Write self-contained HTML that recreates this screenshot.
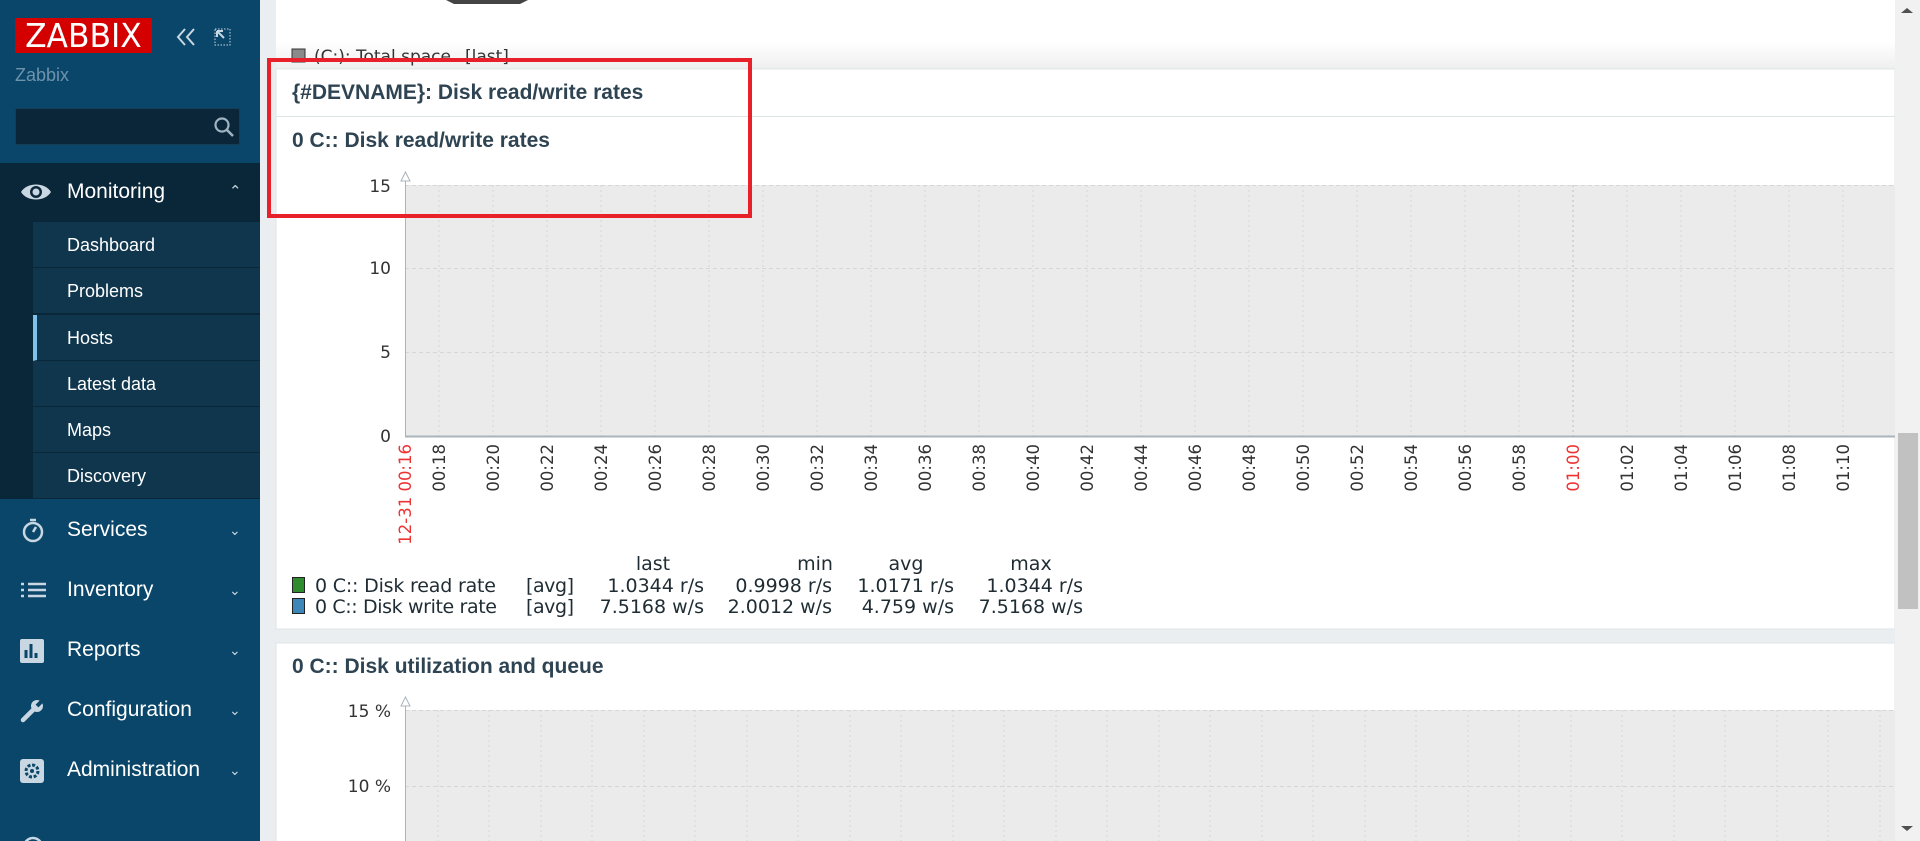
<!DOCTYPE html>
<html style="overflow:hidden;height:841px"><head><meta charset="utf-8"><style>
*{margin:0;padding:0;box-sizing:border-box}
body{width:1920px;height:841px;overflow:hidden;background:#ebeef0;font-family:"Liberation Sans",Arial,sans-serif;position:relative}
#sb{position:absolute;left:0;top:0;width:260px;height:841px;background:#0a466a;overflow:hidden}
.logo{position:absolute;left:15px;top:18px;width:137px;height:35px;background:#d40000;color:#fff;font-size:33px;line-height:36px;text-align:center;font-family:"DejaVu Sans",sans-serif;overflow:hidden}
.logo span{display:inline-block;transform:scaleX(0.95)}
.sub{position:absolute;left:15px;top:65px;color:#6f93aa;font-size:18px}
.srch{position:absolute;left:15px;top:108px;width:225px;height:37px;background:#0b2638;border:1px solid #163d55;border-radius:2px}
.mon{position:absolute;left:0;top:163px;width:260px;height:59px;background:#0a2739}
.subm{position:absolute;left:0;top:222px;width:260px;height:277px;background:#0a2739}
.subm div{position:absolute;left:33px;width:227px;height:46px;background:#10364e;border-bottom:1px solid #0a2739;color:#fff;font-size:18px;line-height:46px;padding-left:34px}
.mi{position:absolute;left:0;width:260px;height:40px;color:#fff;font-size:21px;line-height:40px}
.mi span{position:absolute;left:67px}
.mi svg{position:absolute;left:19px;top:8px}
.mi i{position:absolute;left:229px;font-style:normal;font-size:14px;color:#c9d6df}
.t{position:absolute;font-weight:bold;color:#2f4453;font-size:21px}
</style></head><body>
<div id="sb">
 <div class="logo"><span>ZABBIX</span></div>
 <svg style="position:absolute;left:176px;top:27px" width="22" height="20"><path d="M9 2L2 10l7 8M18 2l-7 8 7 8" stroke="#c8d7e1" stroke-width="2" fill="none"/></svg>
 <svg style="position:absolute;left:214px;top:27px" width="18" height="20"><rect x="1" y="2" width="15" height="16" fill="none" stroke="#c8d7e1" stroke-dasharray="1.5 1.5"/><path d="M3 4h6M3 4v6M3 4l7 7" stroke="#c8d7e1" stroke-width="2" fill="none"/></svg>
 <div class="sub">Zabbix</div>
 <div class="srch"><svg style="position:absolute;left:196px;top:6px" width="24" height="24"><circle cx="10" cy="10" r="6.5" fill="none" stroke="#9fb4c2" stroke-width="2.2"/><path d="M15 15l6 6" stroke="#9fb4c2" stroke-width="2.6"/></svg></div>
 <div class="mon"></div>
 <div class="mi" style="top:172px"><svg width="34" height="24"><path d="M2 12C8 2 26 2 32 12C26 22 8 22 2 12Z" fill="#c8d7e1"/><circle cx="17" cy="12" r="6" fill="#0a2739"/><circle cx="17" cy="12" r="3.5" fill="#c8d7e1"/></svg><span>Monitoring</span><i style="font-size:15px">&#8963;</i></div>
 <div class="subm">
  <div style="top:0">Dashboard</div>
  <div style="top:46px">Problems</div>
  <div style="top:93px;border-left:4px solid #7fc1e8;padding-left:30px">Hosts</div>
  <div style="top:139px">Latest data</div>
  <div style="top:185px">Maps</div>
  <div style="top:231px">Discovery</div>
 </div>
 <div class="mi" style="top:510px"><svg width="30" height="26"><circle cx="14" cy="14" r="9" fill="none" stroke="#c8d7e1" stroke-width="2.5"/><path d="M11 2h6M14 14l3-5" stroke="#c8d7e1" stroke-width="2.5"/></svg><span>Services</span><i>&#8964;</i></div>
 <div class="mi" style="top:570px"><svg width="30" height="26"><path d="M2 6h3M9 6h18M2 12h3M9 12h18M2 18h3M9 18h18" stroke="#c8d7e1" stroke-width="2.5"/></svg><span>Inventory</span><i>&#8964;</i></div>
 <div class="mi" style="top:630px"><svg width="30" height="26"><rect x="1" y="1" width="24" height="24" rx="2" fill="#c8d7e1"/><path d="M7 20v-8M12 20V6M17 20v-5" stroke="#0a466a" stroke-width="3"/></svg><span>Reports</span><i>&#8964;</i></div>
 <div class="mi" style="top:690px"><svg width="30" height="26"><path d="M4 22l11-11" stroke="#c8d7e1" stroke-width="4.5" stroke-linecap="round"/><circle cx="18" cy="8" r="6" fill="#c8d7e1"/><path d="M18 8l6-6" stroke="#0a466a" stroke-width="4"/></svg><span>Configuration</span><i>&#8964;</i></div>
 <div class="mi" style="top:750px"><svg width="30" height="26"><rect x="1" y="1" width="24" height="24" rx="3" fill="#c8d7e1"/><circle cx="13" cy="13" r="6" fill="none" stroke="#0a466a" stroke-width="3" stroke-dasharray="3 1.7"/><circle cx="13" cy="13" r="2" fill="#0a466a"/></svg><span>Administration</span><i>&#8964;</i></div>
 <div class="mi" style="top:825px;height:16px;overflow:hidden"><svg width="30" height="26"><circle cx="14" cy="14" r="9" fill="none" stroke="#c8d7e1" stroke-width="2.5"/></svg></div>
</div>

<svg style="position:absolute;left:0;top:0" width="1895" height="841" font-family="DejaVu Sans, sans-serif">
 <defs><linearGradient id="g" x1="0" y1="0" x2="0" y2="1"><stop offset="0.6" stop-color="#fff"/><stop offset="1" stop-color="#eee"/></linearGradient></defs>
 <rect x="276" y="0" width="1619" height="70" fill="url(#g)"/>
 <path d="M446 0h82l-8 4h-66z" fill="#444"/>
 <rect x="292" y="49" width="13" height="13" fill="#8a8a8a" stroke="#333"/>
 <text x="314" y="62" font-size="17" fill="#333">(C:): Total space</text>
 <text x="465" y="62" font-size="17" fill="#333">[last]</text>
 <rect x="276" y="69" width="1619" height="560" fill="#fff" stroke="#dfe4e7"/>
 <line x1="276" y1="116.5" x2="1895" y2="116.5" stroke="#dfe4e7"/>
 <rect x="405" y="185" width="1490" height="251" fill="#ebebeb"/>
 <g stroke="#d3d7da" stroke-dasharray="4 3"><line x1="405" y1="185.5" x2="1895" y2="185.5"/><line x1="405" y1="268.5" x2="1895" y2="268.5"/><line x1="405" y1="352.5" x2="1895" y2="352.5"/></g>
 <g stroke="#d3d7da" stroke-dasharray="2 3">
  <line x1="439" y1="185" x2="439" y2="436"/><line x1="493" y1="185" x2="493" y2="436"/><line x1="547" y1="185" x2="547" y2="436"/><line x1="601" y1="185" x2="601" y2="436"/><line x1="655" y1="185" x2="655" y2="436"/><line x1="709" y1="185" x2="709" y2="436"/><line x1="763" y1="185" x2="763" y2="436"/><line x1="817" y1="185" x2="817" y2="436"/><line x1="871" y1="185" x2="871" y2="436"/><line x1="925" y1="185" x2="925" y2="436"/><line x1="979" y1="185" x2="979" y2="436"/><line x1="1033" y1="185" x2="1033" y2="436"/><line x1="1087" y1="185" x2="1087" y2="436"/><line x1="1141" y1="185" x2="1141" y2="436"/><line x1="1195" y1="185" x2="1195" y2="436"/><line x1="1249" y1="185" x2="1249" y2="436"/><line x1="1303" y1="185" x2="1303" y2="436"/><line x1="1357" y1="185" x2="1357" y2="436"/><line x1="1411" y1="185" x2="1411" y2="436"/><line x1="1465" y1="185" x2="1465" y2="436"/><line x1="1519" y1="185" x2="1519" y2="436"/><line x1="1573" y1="185" x2="1573" y2="436" stroke="#b8c0c6"/><line x1="1627" y1="185" x2="1627" y2="436"/><line x1="1681" y1="185" x2="1681" y2="436"/><line x1="1735" y1="185" x2="1735" y2="436"/><line x1="1789" y1="185" x2="1789" y2="436"/><line x1="1843" y1="185" x2="1843" y2="436"/>
 </g>
 <line x1="405" y1="436.5" x2="1895" y2="436.5" stroke="#aab4bb" stroke-width="2"/>
 <line x1="405.5" y1="174" x2="405.5" y2="437" stroke="#aab4bb"/>
 <path d="M401 181l4.5-9 4.5 9z" fill="#fff" stroke="#aab4bb"/>
 <g font-size="17" fill="#333" text-anchor="end"><text x="391" y="192">15</text><text x="391" y="274">10</text><text x="391" y="358">5</text><text x="391" y="442">0</text></g>
 <g font-size="16.5" fill="#333" text-anchor="end">
  <text transform="translate(411,444) rotate(-90)" fill="#e33">12-31 00:16</text>
  <text transform="translate(445,444) rotate(-90)">00:18</text><text transform="translate(499,444) rotate(-90)">00:20</text><text transform="translate(553,444) rotate(-90)">00:22</text><text transform="translate(607,444) rotate(-90)">00:24</text><text transform="translate(661,444) rotate(-90)">00:26</text><text transform="translate(715,444) rotate(-90)">00:28</text><text transform="translate(769,444) rotate(-90)">00:30</text><text transform="translate(823,444) rotate(-90)">00:32</text><text transform="translate(877,444) rotate(-90)">00:34</text><text transform="translate(931,444) rotate(-90)">00:36</text><text transform="translate(985,444) rotate(-90)">00:38</text><text transform="translate(1039,444) rotate(-90)">00:40</text><text transform="translate(1093,444) rotate(-90)">00:42</text><text transform="translate(1147,444) rotate(-90)">00:44</text><text transform="translate(1201,444) rotate(-90)">00:46</text><text transform="translate(1255,444) rotate(-90)">00:48</text><text transform="translate(1309,444) rotate(-90)">00:50</text><text transform="translate(1363,444) rotate(-90)">00:52</text><text transform="translate(1417,444) rotate(-90)">00:54</text><text transform="translate(1471,444) rotate(-90)">00:56</text><text transform="translate(1525,444) rotate(-90)">00:58</text><text transform="translate(1579,444) rotate(-90)" fill="#e33">01:00</text><text transform="translate(1633,444) rotate(-90)">01:02</text><text transform="translate(1687,444) rotate(-90)">01:04</text><text transform="translate(1741,444) rotate(-90)">01:06</text><text transform="translate(1795,444) rotate(-90)">01:08</text><text transform="translate(1849,444) rotate(-90)">01:10</text>
 </g>
 <g font-size="19" fill="#1f2c33">
  <text x="653" y="570" text-anchor="middle">last</text><text x="815" y="570" text-anchor="middle">min</text><text x="906" y="570" text-anchor="middle">avg</text><text x="1031" y="570" text-anchor="middle">max</text>
  <rect x="292.5" y="577.5" width="12" height="15" fill="#2e8b2e" stroke="#222"/>
  <rect x="292.5" y="598.5" width="12" height="15" fill="#3d86b8" stroke="#222"/>
  <text x="315" y="592" textLength="181">0 C:: Disk read rate</text><text x="526" y="592" textLength="48">[avg]</text>
  <text x="704" y="592" text-anchor="end">1.0344 r/s</text><text x="832" y="592" text-anchor="end">0.9998 r/s</text><text x="954" y="592" text-anchor="end">1.0171 r/s</text><text x="1083" y="592" text-anchor="end">1.0344 r/s</text>
  <text x="315" y="613" textLength="182">0 C:: Disk write rate</text><text x="526" y="613" textLength="48">[avg]</text>
  <text x="704" y="613" text-anchor="end">7.5168 w/s</text><text x="832" y="613" text-anchor="end">2.0012 w/s</text><text x="954" y="613" text-anchor="end">4.759 w/s</text><text x="1083" y="613" text-anchor="end">7.5168 w/s</text>
 </g>
 <rect x="276" y="643" width="1619" height="210" fill="#fff" stroke="#dfe4e7"/>
 <rect x="405" y="710" width="1490" height="131" fill="#ebebeb"/>
 <g stroke="#d3d7da" stroke-dasharray="4 3"><line x1="405" y1="710.5" x2="1895" y2="710.5"/><line x1="405" y1="786.5" x2="1895" y2="786.5"/></g>
 <g stroke="#d3d7da" stroke-dasharray="2 3">
  <line x1="438" y1="710" x2="438" y2="841"/><line x1="489" y1="710" x2="489" y2="841"/><line x1="541" y1="710" x2="541" y2="841"/><line x1="592" y1="710" x2="592" y2="841"/><line x1="644" y1="710" x2="644" y2="841"/><line x1="695" y1="710" x2="695" y2="841"/><line x1="747" y1="710" x2="747" y2="841"/><line x1="798" y1="710" x2="798" y2="841"/><line x1="850" y1="710" x2="850" y2="841"/><line x1="901" y1="710" x2="901" y2="841"/><line x1="953" y1="710" x2="953" y2="841"/><line x1="1004" y1="710" x2="1004" y2="841"/><line x1="1056" y1="710" x2="1056" y2="841"/><line x1="1107" y1="710" x2="1107" y2="841"/><line x1="1159" y1="710" x2="1159" y2="841"/><line x1="1210" y1="710" x2="1210" y2="841"/><line x1="1262" y1="710" x2="1262" y2="841"/><line x1="1313" y1="710" x2="1313" y2="841"/><line x1="1365" y1="710" x2="1365" y2="841"/><line x1="1416" y1="710" x2="1416" y2="841"/><line x1="1468" y1="710" x2="1468" y2="841"/><line x1="1519" y1="710" x2="1519" y2="841"/><line x1="1571" y1="710" x2="1571" y2="841"/><line x1="1622" y1="710" x2="1622" y2="841"/><line x1="1674" y1="710" x2="1674" y2="841"/><line x1="1725" y1="710" x2="1725" y2="841"/><line x1="1777" y1="710" x2="1777" y2="841"/><line x1="1828" y1="710" x2="1828" y2="841"/><line x1="1880" y1="710" x2="1880" y2="841"/>
 </g>
 <line x1="405.5" y1="699" x2="405.5" y2="841" stroke="#aab4bb"/>
 <path d="M401 706l4.5-9 4.5 9z" fill="#fff" stroke="#aab4bb"/>
 <g font-size="17" fill="#333" text-anchor="end"><text x="391" y="717">15 %</text><text x="391" y="792">10 %</text></g>
</svg>
<div class="t" style="left:292px;top:81px">{#DEVNAME}: Disk read/write rates</div>
<div class="t" style="left:292px;top:129px">0 C:: Disk read/write rates</div>
<div class="t" style="left:292px;top:655px">0 C:: Disk utilization and queue</div>
<div style="position:absolute;left:267px;top:58px;width:485px;height:160px;border:4px solid #e8202a"></div>
<div style="position:absolute;left:1895px;top:0;width:25px;height:841px;background:#f1f1f1;overflow:hidden">
 <div style="position:absolute;left:6px;top:8px;width:0;height:0;border-left:6px solid transparent;border-right:6px solid transparent;border-bottom:5px solid #505050"></div>
 <div style="position:absolute;left:3px;top:433px;width:20px;height:176px;background:#c1c1c1"></div>
 <div style="position:absolute;left:6px;top:826px;width:0;height:0;border-left:6px solid transparent;border-right:6px solid transparent;border-top:5px solid #505050"></div>
</div>
</body></html>
